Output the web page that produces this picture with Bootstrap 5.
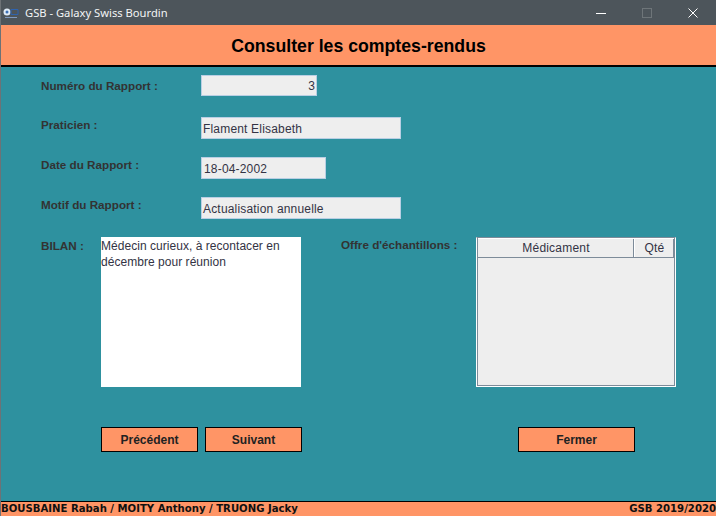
<!DOCTYPE html>
<html lang="fr">
<head>
<meta charset="utf-8">
<title>GSB - Galaxy Swiss Bourdin</title>
<link href="https://cdn.jsdelivr.net/npm/bootstrap@5.3.0/dist/css/bootstrap.min.css" rel="stylesheet">
<style>
html,body{height:516px;overflow:hidden;margin:0;}
body{font-family:"Liberation Sans",Arial,sans-serif;background:#2e919f;}
.appwin{width:716px;height:516px;border-left:1px solid #6d7276;}
.titlebar{height:25px;background:#4d555b;color:#f2f4f5;font-family:"Noto Sans",sans-serif;font-size:11.2px;line-height:25px;}
.tb-logo{width:16px;height:12px;margin-left:2px;margin-right:6px;}
.tb-ctl{width:46px;height:25px;}
.headband{height:42px;background:#ff9566;border-bottom:2px solid #000;color:#000;font-size:17.7px;font-weight:700;margin:0;line-height:42px;}
.formzone{height:434px;position:relative;}
.lbl{font-size:11.7px;font-weight:700;color:#333;line-height:14px;}
.frow{padding-left:40px;}
.frow .lbl{width:160px;flex:none;}
.fld{height:21px;background:#eee;border:1px solid #b9cfe4;font-size:12px;letter-spacing:.18px;line-height:20px;color:#333344;padding:0 1px;flex:none;}
.w116{width:116px;text-align:right;}
.w200{width:200px;}
.w125{width:125px;padding-left:2px;}
.tall{height:22px;line-height:22px;}
.r1{padding-top:8px;}
.r1 .lbl{padding-top:4px;}
.r2{padding-top:21px;}
.r2 .lbl{padding-top:1px;}
.r3{padding-top:18px;}
.r3 .lbl{padding-top:1px;}
.r4{padding-top:18px;}
.r4 .lbl{padding-top:1px;}
.lower{padding-top:18px;height:168px;}
.bilan-lbl{width:60px!important;padding-top:2px;}
.bilan-box{width:200px;height:150px;background:#fff;font-size:12px;letter-spacing:.04px;line-height:16px;color:#333344;flex:none;padding:1px 0 0 0;}
.offre-lbl{width:135px!important;margin-left:40px;padding-top:1px;}
.tbl-box{width:200px;height:150px;background:#eee;border:1px solid #fff;border-top-color:#7d8b99;flex:none;}
.tbl-inner{height:148px;border:1px solid #7d8b99;border-top:0;}
.tbl-head{height:20px;font-size:12px;letter-spacing:.2px;color:#333344;line-height:18px;text-align:center;border-bottom:1px solid #7d8b99;border-top:1px solid #fff;}
.th-a{width:157px;border-right:1px solid #fff;box-shadow:inset -1px 0 0 #7d8b99;}
.th-b{width:39px;padding-left:1px;border-right:1px solid #7d8b99;}
.btnrow{padding-top:40px;padding-left:100px;}
.gsb-btn{height:25px;background:#ff9566;border:1px solid #000;border-radius:0;color:#222;font-size:12px;font-weight:700;padding:0;line-height:22px;}
.wb{width:97px;}
.wf{width:117px;margin-left:216px;}
.gap7{margin-left:7px;}
.footband{position:absolute;left:0;right:0;top:434px;}
.footerbar{height:15px;background:#ff9566;border-top:1px solid #000;color:#111;font-family:"DejaVu Sans",sans-serif;font-size:10.12px;font-weight:700;line-height:14px;}
</style>
</head>
<body>
<div class="appwin d-flex flex-column">
  <div class="titlebar d-flex align-items-center">
    <svg class="tb-logo" viewBox="0 0 16 12"><circle cx="4" cy="5" r="3.5" fill="#dfeaf5"/><circle cx="4" cy="5" r="1.5" fill="#3b6fb5"/><path d="M8 2.5h7v5H8z" fill="none" stroke="#2f63ad" stroke-width="1"/><path d="M2 10.5h12" stroke="#7f9ac0"/></svg>
    <span class="flex-grow-1">GSB - Galaxy Swiss Bourdin</span>
    <div class="tb-ctl d-flex align-items-center justify-content-center"><svg width="10" height="10" viewBox="0 0 10 10"><path d="M0 5.5h10" stroke="#fff"/></svg></div>
    <div class="tb-ctl d-flex align-items-center justify-content-center"><svg width="10" height="10" viewBox="0 0 10 10"><rect x=".5" y=".5" width="9" height="9" fill="none" stroke="#6e7579"/></svg></div>
    <div class="tb-ctl d-flex align-items-center justify-content-center"><svg width="10" height="10" viewBox="0 0 10 10"><path d="M.5.5l9 9M9.5.5l-9 9" stroke="#fff"/></svg></div>
  </div>
  <h1 class="headband text-center">Consulter les comptes-rendus</h1>
  <div class="formzone">
    <div class="frow r1 d-flex align-items-start"><span class="lbl">Numéro du Rapport :</span><div class="fld w116">3</div></div>
    <div class="frow r2 d-flex align-items-start"><span class="lbl">Praticien :</span><div class="fld w200 tall">Flament Elisabeth</div></div>
    <div class="frow r3 d-flex align-items-start"><span class="lbl">Date du Rapport :</span><div class="fld w125 tall">18-04-2002</div></div>
    <div class="frow r4 d-flex align-items-start"><span class="lbl">Motif du Rapport :</span><div class="fld w200 tall">Actualisation annuelle</div></div>
    <div class="frow lower d-flex align-items-start">
      <span class="lbl bilan-lbl">BILAN :</span>
      <div class="bilan-box">Médecin curieux, à recontacer en décembre pour réunion</div>
      <span class="lbl offre-lbl">Offre d'échantillons :</span>
      <div class="tbl-box"><div class="tbl-inner">
        <div class="tbl-head d-flex"><div class="th-a">Médicament</div><div class="th-b">Qté</div></div>
      </div></div>
    </div>
    <div class="btnrow d-flex">
      <button class="btn gsb-btn wb" type="button">Précédent</button>
      <button class="btn gsb-btn wb gap7" type="button">Suivant</button>
      <button class="btn gsb-btn wf" type="button">Fermer</button>
    </div>
    <div class="footband footerbar d-flex justify-content-between"><span>BOUSBAINE Rabah / MOITY Anthony / TRUONG Jacky</span><span>GSB 2019/2020</span></div>
  </div>
</div>
</body>
</html>
